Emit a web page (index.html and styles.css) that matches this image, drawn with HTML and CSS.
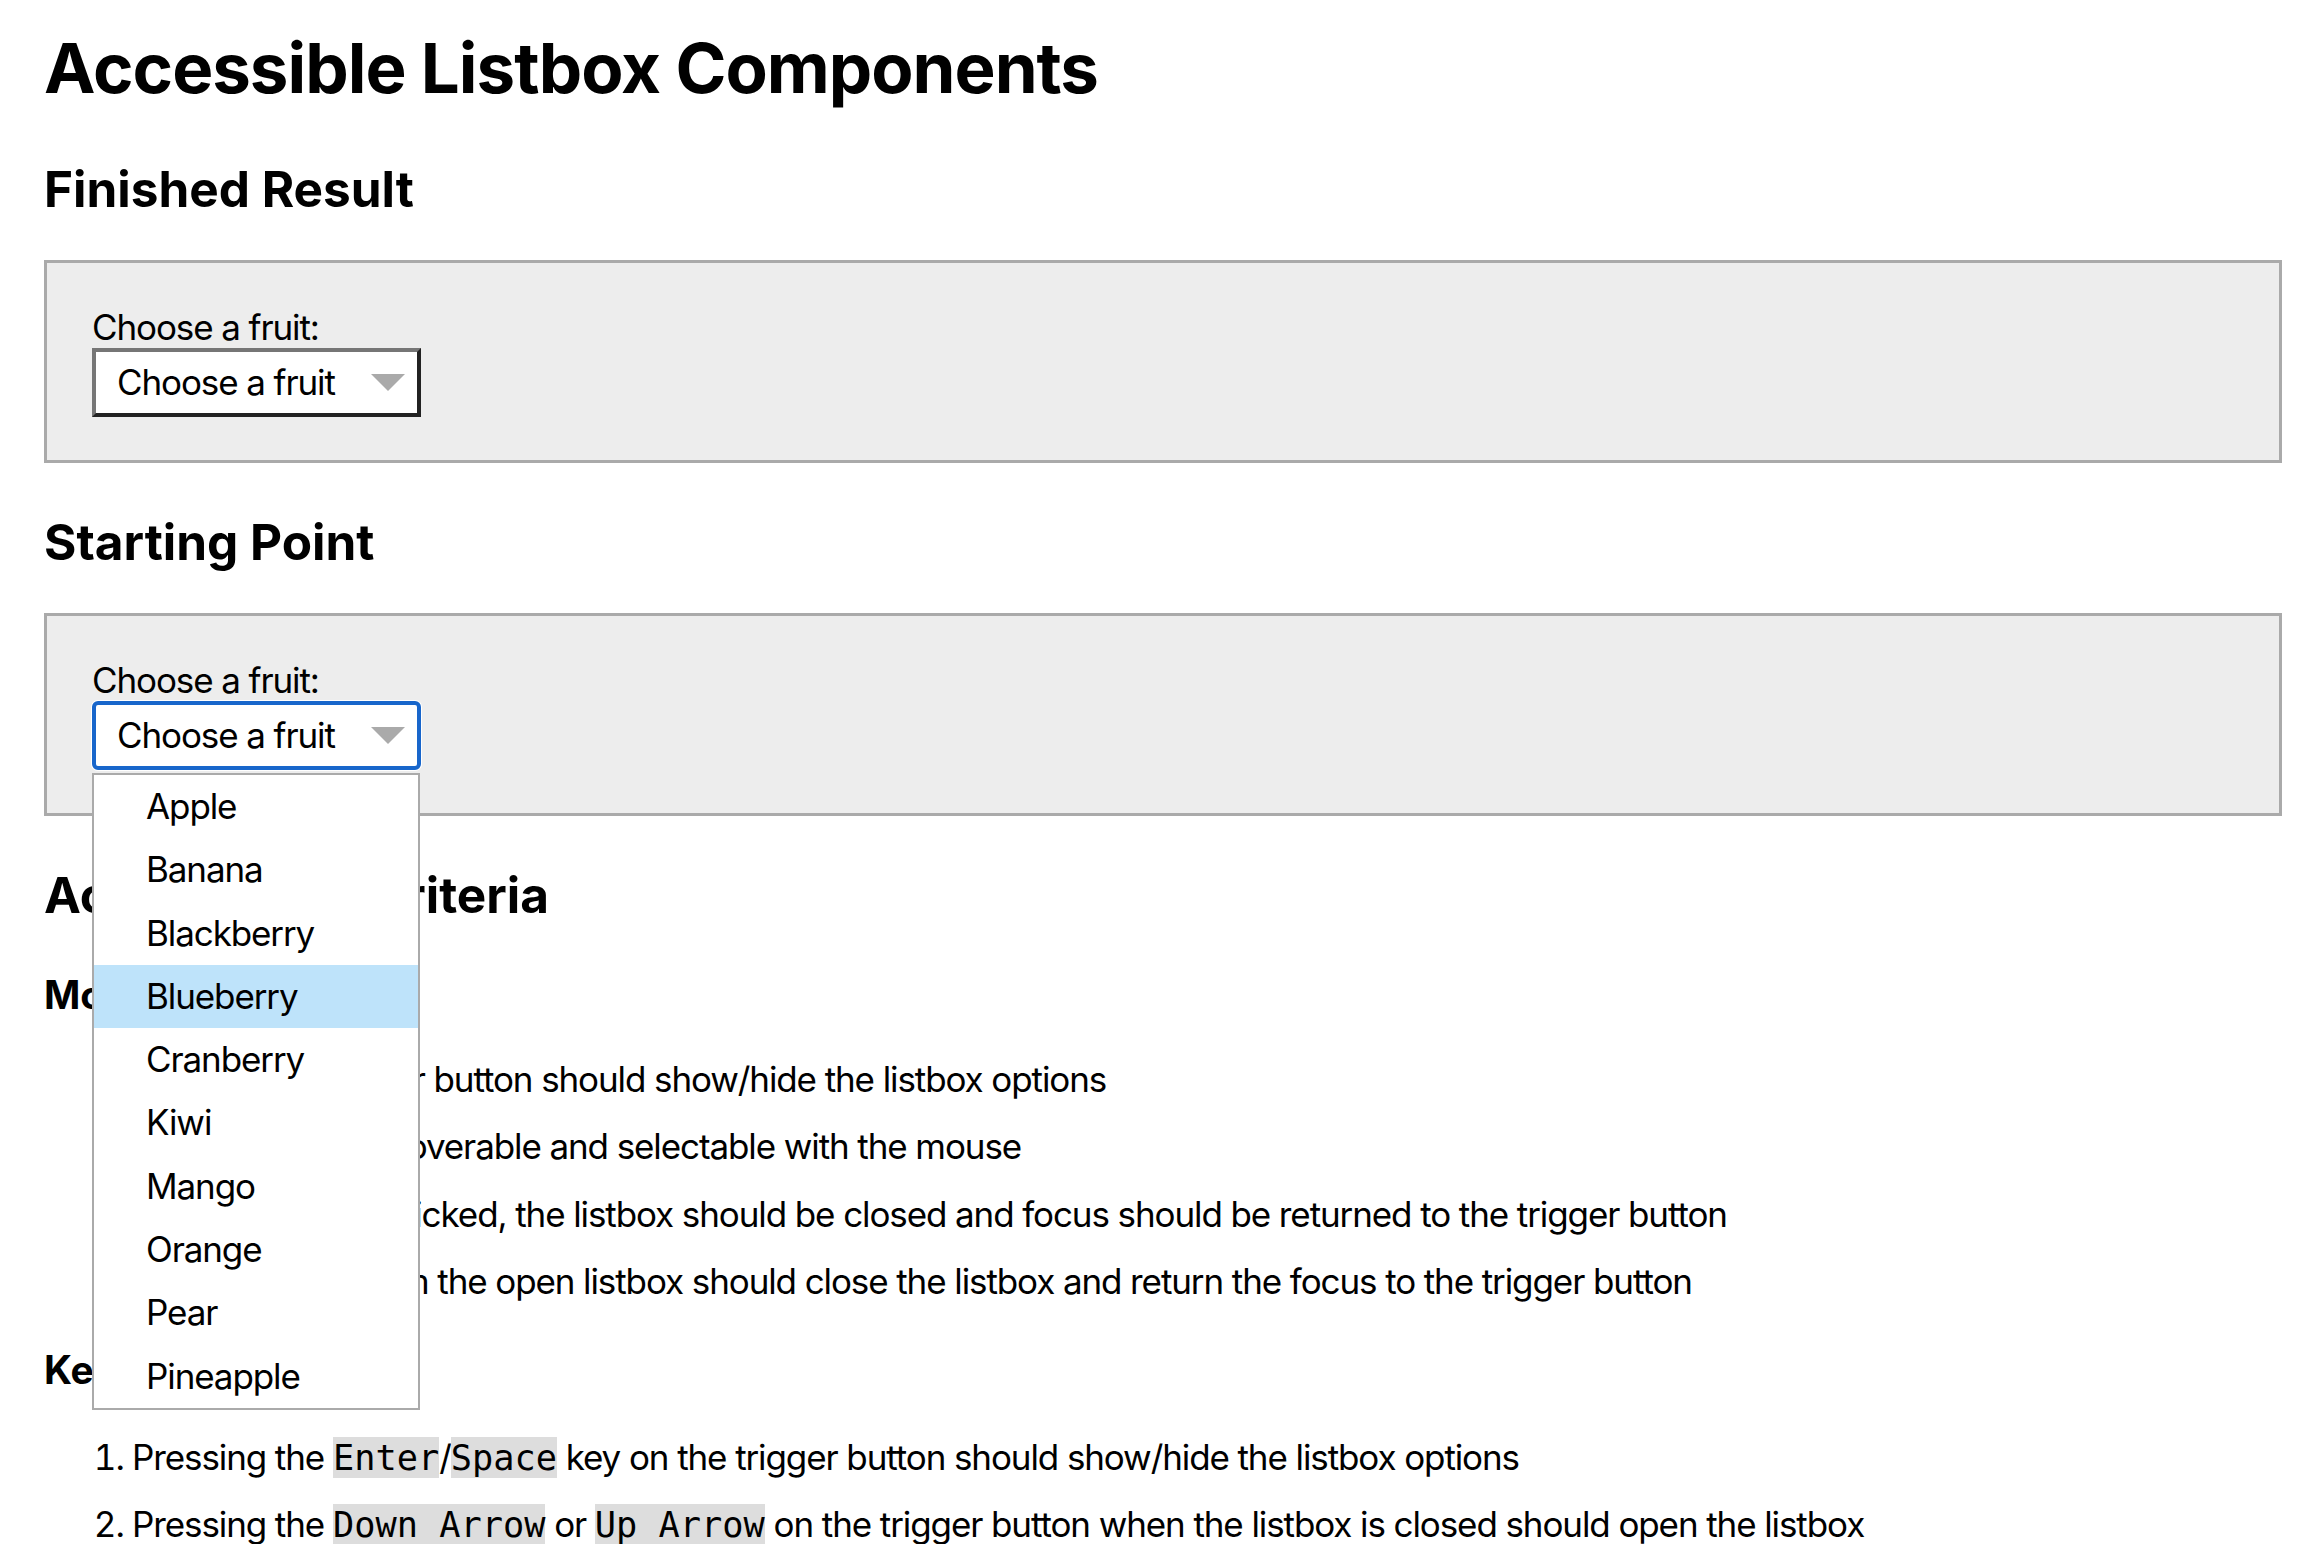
FILE: index.html
```html
<!DOCTYPE html>
<html lang="en">
<head>
<meta charset="utf-8">
<title>Accessible Listbox Components</title>
<link rel="stylesheet" href="styles.css">
</head>
<body>
<main class="page">
  <h1 class="title">Accessible Listbox Components</h1>

  <h2 class="section-title">Finished Result</h2>
  <section class="demo">
    <span class="field-label">Choose a fruit:</span>
    <div class="combo">
      <button class="trigger" type="button" aria-haspopup="listbox">
        <span class="trigger-text">Choose a fruit</span>
        <span class="caret" aria-hidden="true"></span>
      </button>
    </div>
  </section>

  <h2 class="section-title">Starting Point</h2>
  <section class="demo">
    <span class="field-label">Choose a fruit:</span>
    <div class="combo">
      <button class="trigger trigger-focused" type="button" aria-haspopup="listbox" aria-expanded="true">
        <span class="trigger-text">Choose a fruit</span>
        <span class="caret" aria-hidden="true"></span>
      </button>
      <ul class="listbox" role="listbox">
        <li class="option" role="option">Apple</li>
        <li class="option" role="option">Banana</li>
        <li class="option" role="option">Blackberry</li>
        <li class="option option-active" role="option">Blueberry</li>
        <li class="option" role="option">Cranberry</li>
        <li class="option" role="option">Kiwi</li>
        <li class="option" role="option">Mango</li>
        <li class="option" role="option">Orange</li>
        <li class="option" role="option">Pear</li>
        <li class="option" role="option">Pineapple</li>
      </ul>
    </div>
  </section>

  <h2 class="section-title criteria-title">Accessibility Criteria</h2>

  <h3 class="sub-title">Mouse Support</h3>
  <ul class="criteria">
    <li>Clicking the trigger button should show/hide the listbox options</li>
    <li>Items should be hoverable and selectable with the mouse</li>
    <li>When an item is clicked, the listbox should be closed and focus should be returned to the trigger button</li>
    <li>Clicking away from the open listbox should close the listbox and return the focus to the trigger button</li>
  </ul>

  <h3 class="sub-title">Keyboard Support</h3>
  <ol class="criteria keys">
    <li>Pressing the <code class="key">Enter</code>/<code class="key">Space</code> key on the trigger button should show/hide the listbox options</li>
    <li>Pressing the <code class="key">Down Arrow</code> or <code class="key">Up Arrow</code> on the trigger button when the listbox is closed should open the listbox</li>
    <li>Pressing the <code class="key">Down Arrow</code>/<code class="key">Up Arrow</code> in the open listbox should move to the next/previous option</li>
    <li>Pressing <code class="key">Home</code>/<code class="key">End</code> should move to the first/last option</li>
    <li>Pressing <code class="key">Escape</code> should close the listbox and return the focus to the trigger button</li>
  </ol>
</main>
</body>
</html>
```

FILE: styles.css
```css
* {
  box-sizing: border-box;
}

html, body {
  margin: 0;
  padding: 0;
  background: #ffffff;
}

body {
  font-family: Inter, "Liberation Sans", sans-serif;
  font-size: 35px;
  line-height: 43px;
  letter-spacing: -1.1px;
  color: #000000;
}

.page {
  padding: 26px 38px 80px 44px;
}

.title {
  margin: 0;
  font-size: 69px;
  line-height: 84px;
  font-weight: 700;
  letter-spacing: -1px;
}

.section-title {
  margin: 49px 0 41px;
  font-size: 49.5px;
  line-height: 60px;
  font-weight: 700;
  letter-spacing: 0;
}

.criteria-title {
  margin-bottom: 46px;
}

.sub-title {
  margin: 40.5px 0 0;
  font-size: 39px;
  line-height: 47px;
  font-weight: 700;
  letter-spacing: 0;
}

/* demo panels */
.demo {
  display: flex;
  flex-direction: column;
  align-items: flex-start;
  background: #ededed;
  border: 3px solid #aaaaaa;
  padding: 44px 46px 43px 45px;
}

.field-label {
  display: block;
  line-height: 41px;
}

.combo {
  position: relative;
}

.trigger {
  display: flex;
  align-items: center;
  justify-content: space-between;
  width: 329px;
  margin: 0;
  padding: 9px 12px 9px 21px;
  font: inherit;
  letter-spacing: inherit;
  line-height: 43px;
  color: #000000;
  background: #ffffff;
  border: 4px solid;
  border-color: #767676 #222222 #222222 #767676;
  border-radius: 0;
  cursor: pointer;
  text-align: left;
}

.trigger-focused {
  border-color: #1866cb;
  border-radius: 6px;
  box-shadow: 0 0 0 1px #ffffff;
}

.caret {
  width: 0;
  height: 0;
  border-left: 17.5px solid transparent;
  border-right: 17.5px solid transparent;
  border-top: 17px solid #aaaaaa;
}

/* listbox popup */
.listbox {
  position: absolute;
  top: calc(100% + 3px);
  left: 0;
  width: 328px;
  margin: 0;
  padding: 0;
  list-style: none;
  background: #ffffff;
  border: 2px solid #aaaaaa;
  z-index: 2;
}

.option {
  padding: 10px 12px 10px 52px;
  line-height: 43.3px;
}

.option-active {
  background: #bee3fa;
}

/* criteria lists */
.criteria {
  margin: 37.5px 0 0;
  padding-left: 88px;
}

.criteria li {
  line-height: 47px;
  margin-bottom: 20.5px;
}

.keys {
  margin-top: 41px;
}

.key {
  font-family: "DejaVu Sans Mono", "Liberation Mono", monospace;
  font-size: 35.3px;
  line-height: 1;
  letter-spacing: 0;
  background: #dddddd;
}
```
